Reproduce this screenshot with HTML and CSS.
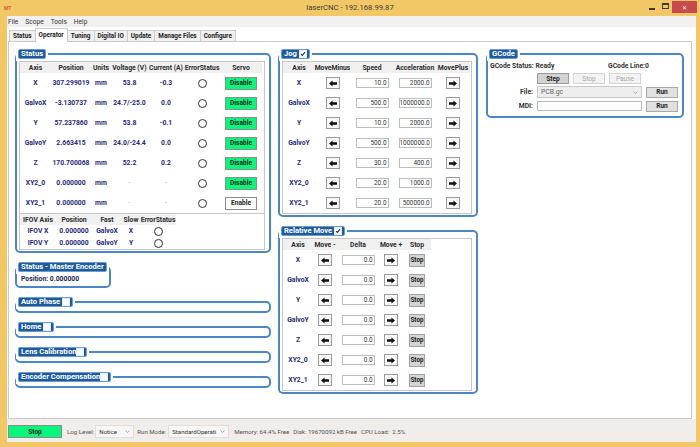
FILE: index.html
```html
<!DOCTYPE html>
<html>
<head>
<meta charset="utf-8">
<title>laserCNC</title>
<link rel="stylesheet" href="styles.css">
</head>
<body>
<div class="window">
  <div class="titlebar">
    <div class="tb-left"><span class="app-icon">MT</span></div>
    <div class="title">laserCNC - 192.168.99.87</div>
    <div class="controls"><span class="ctl-min"></span><span class="ctl-max"></span><span class="ctl-close">✕</span></div>
  </div>
  <div class="client">
    <div class="menubar"><span>File</span><span>Scope</span><span>Tools</span><span>Help</span></div>
    <div class="tabarea">
      <div class="tabstrip">
        <span class="tab">Status</span><span class="tab active">Operator</span><span class="tab">Tuning</span><span class="tab">Digital IO</span><span class="tab">Update</span><span class="tab">Manage Files</span><span class="tab">Configure</span>
      </div>
      <div class="panel">
        <div class="col col1">
          <fieldset class="group">
            <legend>Status</legend>
            <div class="gridbox">
              <div class="grid g-status">
                <span class="h">Axis</span><span class="h">Position</span><span class="h">Units</span><span class="h">Voltage (V)</span><span class="h">Current (A)</span><span class="h">ErrorStatus</span><span class="h">Servo</span>

                <span class="v">X</span><span class="v">307.299019</span><span class="v">mm</span><span class="v">53.8</span><span class="v">-0.3</span><span><i class="circle"></i></span><span><b class="btn servo green">Disable</b></span>

                <span class="v">GalvoX</span><span class="v">-3.130737</span><span class="v">mm</span><span class="v">24.7/-25.0</span><span class="v">0.0</span><span><i class="circle"></i></span><span><b class="btn servo green">Disable</b></span>

                <span class="v">Y</span><span class="v">57.237860</span><span class="v">mm</span><span class="v">53.8</span><span class="v">-0.1</span><span><i class="circle"></i></span><span><b class="btn servo green">Disable</b></span>

                <span class="v">GalvoY</span><span class="v">2.663415</span><span class="v">mm</span><span class="v">24.0/-24.4</span><span class="v">0.0</span><span><i class="circle"></i></span><span><b class="btn servo green">Disable</b></span>

                <span class="v">Z</span><span class="v">170.700068</span><span class="v">mm</span><span class="v">52.2</span><span class="v">0.2</span><span><i class="circle"></i></span><span><b class="btn servo green">Disable</b></span>

                <span class="v">XY2_0</span><span class="v">0.000000</span><span class="v">mm</span><span class="dash">-</span><span class="dash">-</span><span><i class="circle"></i></span><span><b class="btn servo green">Disable</b></span>

                <span class="v">XY2_1</span><span class="v">0.000000</span><span class="v">mm</span><span class="dash">-</span><span class="dash">-</span><span><i class="circle"></i></span><span><b class="btn servo white">Enable</b></span>
              </div>
              <div class="grid g-ifov">
                <span class="h">IFOV Axis</span><span class="h">Position</span><span class="h">Fast</span><span class="h">Slow</span><span class="h">ErrorStatus</span>
                <span class="v">IFOV X</span><span class="v">0.000000</span><span class="v">GalvoX</span><span class="v">X</span><span><i class="circle"></i></span>
                <span class="v">IFOV Y</span><span class="v">0.000000</span><span class="v">GalvoY</span><span class="v">Y</span><span><i class="circle"></i></span>
              </div>
            </div>
          </fieldset>

          <fieldset class="group enc">
            <legend>Status - Master Encoder</legend>
            <div class="enc-line">Position: 0.000000</div>
          </fieldset>

          <fieldset class="group">
            <legend>Auto Phase<span class="cb"><svg viewBox="0 0 7 7"></svg></span></legend>
            <div class="empty"></div>
          </fieldset>
          <fieldset class="group">
            <legend>Home<span class="cb"><svg viewBox="0 0 7 7"></svg></span></legend>
            <div class="empty"></div>
          </fieldset>
          <fieldset class="group">
            <legend>Lens Calibration<span class="cb tight"><svg viewBox="0 0 7 7"></svg></span></legend>
            <div class="empty"></div>
          </fieldset>
          <fieldset class="group">
            <legend>Encoder Compensation<span class="cb tight"><svg viewBox="0 0 7 7"></svg></span></legend>
            <div class="empty"></div>
          </fieldset>
        </div>

        <div class="col col2">
          <fieldset class="group">
            <legend>Jog<span class="cb"><svg viewBox="0 0 7 7"><path d="M1.2 3.6 L2.8 5.2 L5.8 1.4" /></svg></span></legend>
            <div class="gridbox">
              <div class="grid g-jog">
                <span class="h">Axis</span><span class="h">MoveMinus</span><span class="h">Speed</span><span class="h">Acceleration</span><span class="h">MovePlus</span>

                <span class="v">X</span><span><b class="arrowbtn"><svg viewBox="0 0 9 7"><polygon points="0,3.5 4,0 4,2 9,2 9,5 4,5 4,7"/></svg></b></span><span><b class="field">10.0</b></span><span><b class="field">2000.0</b></span><span><b class="arrowbtn"><svg viewBox="0 0 9 7"><polygon points="9,3.5 5,0 5,2 0,2 0,5 5,5 5,7"/></svg></b></span>

                <span class="v">GalvoX</span><span><b class="arrowbtn"><svg viewBox="0 0 9 7"><polygon points="0,3.5 4,0 4,2 9,2 9,5 4,5 4,7"/></svg></b></span><span><b class="field">500.0</b></span><span><b class="field">1000000.0</b></span><span><b class="arrowbtn"><svg viewBox="0 0 9 7"><polygon points="9,3.5 5,0 5,2 0,2 0,5 5,5 5,7"/></svg></b></span>

                <span class="v">Y</span><span><b class="arrowbtn"><svg viewBox="0 0 9 7"><polygon points="0,3.5 4,0 4,2 9,2 9,5 4,5 4,7"/></svg></b></span><span><b class="field">10.0</b></span><span><b class="field">2000.0</b></span><span><b class="arrowbtn"><svg viewBox="0 0 9 7"><polygon points="9,3.5 5,0 5,2 0,2 0,5 5,5 5,7"/></svg></b></span>

                <span class="v">GalvoY</span><span><b class="arrowbtn"><svg viewBox="0 0 9 7"><polygon points="0,3.5 4,0 4,2 9,2 9,5 4,5 4,7"/></svg></b></span><span><b class="field">500.0</b></span><span><b class="field">1000000.0</b></span><span><b class="arrowbtn"><svg viewBox="0 0 9 7"><polygon points="9,3.5 5,0 5,2 0,2 0,5 5,5 5,7"/></svg></b></span>

                <span class="v">Z</span><span><b class="arrowbtn"><svg viewBox="0 0 9 7"><polygon points="0,3.5 4,0 4,2 9,2 9,5 4,5 4,7"/></svg></b></span><span><b class="field">30.0</b></span><span><b class="field">400.0</b></span><span><b class="arrowbtn"><svg viewBox="0 0 9 7"><polygon points="9,3.5 5,0 5,2 0,2 0,5 5,5 5,7"/></svg></b></span>

                <span class="v">XY2_0</span><span><b class="arrowbtn"><svg viewBox="0 0 9 7"><polygon points="0,3.5 4,0 4,2 9,2 9,5 4,5 4,7"/></svg></b></span><span><b class="field">20.0</b></span><span><b class="field">1000.0</b></span><span><b class="arrowbtn"><svg viewBox="0 0 9 7"><polygon points="9,3.5 5,0 5,2 0,2 0,5 5,5 5,7"/></svg></b></span>

                <span class="v">XY2_1</span><span><b class="arrowbtn"><svg viewBox="0 0 9 7"><polygon points="0,3.5 4,0 4,2 9,2 9,5 4,5 4,7"/></svg></b></span><span><b class="field">20.0</b></span><span><b class="field">500000.0</b></span><span><b class="arrowbtn"><svg viewBox="0 0 9 7"><polygon points="9,3.5 5,0 5,2 0,2 0,5 5,5 5,7"/></svg></b></span>
              </div>
            </div>
          </fieldset>

          <fieldset class="group">
            <legend>Relative Move<span class="cb"><svg viewBox="0 0 7 7"><path d="M1.2 3.6 L2.8 5.2 L5.8 1.4" /></svg></span></legend>
            <div class="gridbox">
              <div class="grid g-rel">
                <span class="h">Axis</span><span class="h">Move -</span><span class="h">Delta</span><span class="h">Move +</span><span class="h">Stop</span>

                <span class="v">X</span><span><b class="arrowbtn"><svg viewBox="0 0 9 7"><polygon points="0,3.5 4,0 4,2 9,2 9,5 4,5 4,7"/></svg></b></span><span><b class="field">0.0</b></span><span><b class="arrowbtn"><svg viewBox="0 0 9 7"><polygon points="9,3.5 5,0 5,2 0,2 0,5 5,5 5,7"/></svg></b></span><span><b class="btn stopbtn">Stop</b></span>

                <span class="v">GalvoX</span><span><b class="arrowbtn"><svg viewBox="0 0 9 7"><polygon points="0,3.5 4,0 4,2 9,2 9,5 4,5 4,7"/></svg></b></span><span><b class="field">0.0</b></span><span><b class="arrowbtn"><svg viewBox="0 0 9 7"><polygon points="9,3.5 5,0 5,2 0,2 0,5 5,5 5,7"/></svg></b></span><span><b class="btn stopbtn">Stop</b></span>

                <span class="v">Y</span><span><b class="arrowbtn"><svg viewBox="0 0 9 7"><polygon points="0,3.5 4,0 4,2 9,2 9,5 4,5 4,7"/></svg></b></span><span><b class="field">0.0</b></span><span><b class="arrowbtn"><svg viewBox="0 0 9 7"><polygon points="9,3.5 5,0 5,2 0,2 0,5 5,5 5,7"/></svg></b></span><span><b class="btn stopbtn">Stop</b></span>

                <span class="v">GalvoY</span><span><b class="arrowbtn"><svg viewBox="0 0 9 7"><polygon points="0,3.5 4,0 4,2 9,2 9,5 4,5 4,7"/></svg></b></span><span><b class="field">0.0</b></span><span><b class="arrowbtn"><svg viewBox="0 0 9 7"><polygon points="9,3.5 5,0 5,2 0,2 0,5 5,5 5,7"/></svg></b></span><span><b class="btn stopbtn">Stop</b></span>

                <span class="v">Z</span><span><b class="arrowbtn"><svg viewBox="0 0 9 7"><polygon points="0,3.5 4,0 4,2 9,2 9,5 4,5 4,7"/></svg></b></span><span><b class="field">0.0</b></span><span><b class="arrowbtn"><svg viewBox="0 0 9 7"><polygon points="9,3.5 5,0 5,2 0,2 0,5 5,5 5,7"/></svg></b></span><span><b class="btn stopbtn">Stop</b></span>

                <span class="v">XY2_0</span><span><b class="arrowbtn"><svg viewBox="0 0 9 7"><polygon points="0,3.5 4,0 4,2 9,2 9,5 4,5 4,7"/></svg></b></span><span><b class="field">0.0</b></span><span><b class="arrowbtn"><svg viewBox="0 0 9 7"><polygon points="9,3.5 5,0 5,2 0,2 0,5 5,5 5,7"/></svg></b></span><span><b class="btn stopbtn">Stop</b></span>

                <span class="v">XY2_1</span><span><b class="arrowbtn"><svg viewBox="0 0 9 7"><polygon points="0,3.5 4,0 4,2 9,2 9,5 4,5 4,7"/></svg></b></span><span><b class="field">0.0</b></span><span><b class="arrowbtn"><svg viewBox="0 0 9 7"><polygon points="9,3.5 5,0 5,2 0,2 0,5 5,5 5,7"/></svg></b></span><span><b class="btn stopbtn">Stop</b></span>
              </div>
            </div>
          </fieldset>
        </div>

        <div class="col col3">
          <fieldset class="group">
            <legend>GCode</legend>
            <div class="gcode">
              <div class="gline"><span>GCode Status: Ready</span><span>GCode Line:0</span></div>
              <div class="gbtns"><b class="btn gbtn step">Step</b><b class="btn gbtn disabled">Stop</b><b class="btn gbtn disabled">Pause</b></div>
              <span class="glabel">File:</span>
              <div class="combo"><span>PCB.gc</span><svg class="chev" viewBox="0 0 5 3"><polyline points="0.5,0.5 2.5,2.5 4.5,0.5"/></svg></div>
              <b class="btn run">Run</b>
              <span class="glabel">MDI:</span>
              <div class="mdi"></div>
              <b class="btn run">Run</b>
            </div>
          </fieldset>
        </div>
      </div>
    </div>
    <div class="statusbar">
      <b class="btn sb-stop">Stop</b>
      <span>Log Level:</span>
      <div class="sb-combo c-notice"><span>Notice</span><svg class="chev" viewBox="0 0 5 3"><polyline points="0.5,0.5 2.5,2.5 4.5,0.5"/></svg></div>
      <span class="sb-label">Run Mode:</span>
      <div class="sb-combo c-run"><span>StandardOperati</span><svg class="chev" viewBox="0 0 5 3"><polyline points="0.5,0.5 2.5,2.5 4.5,0.5"/></svg></div>
      <span class="stat first">Memory: 64.4% Free</span>
      <span class="stat">Disk: 19670092 kB Free</span>
      <span class="stat">CPU Load:&nbsp; 2.5%</span>
    </div>
  </div>
</div>
</body>
</html>
```

FILE: styles.css
```css
* { box-sizing: border-box; }
html, body { margin: 0; padding: 0; }
body {
  width: 700px; height: 447px; overflow: hidden;
  background: #f1c865;
  font-family: Roboto, "Liberation Sans", Arial, sans-serif;
  font-size: 6.8px; color: #222;
}
b, i { font-style: normal; }

.window { width: 700px; height: 447px; display: flex; flex-direction: column; background: #f1c865; }

/* title bar */
.titlebar { flex: 0 0 16px; display: grid; grid-template-columns: 1fr auto 1fr; }
.tb-left { display: flex; align-items: center; padding-left: 4px; }
.app-icon { font-size: 5px; font-weight: 700; color: #d8603a; }
.title { font-size: 7.7px; color: #3b3b3b; line-height: 16px; }
.controls { justify-self: end; display: flex; align-items: flex-start; padding-right: 3px; }
.ctl-min { width: 6px; height: 2px; background: #3a3a3a; margin-top: 8px; }
.ctl-max { width: 7px; height: 6px; border: 1px solid #3a3a3a; border-top-width: 2px; margin: 3px 0 0 7px; }
.ctl-close {
  width: 25px; height: 12px; margin: 1px 0 0 3px;
  background: #c94a4e; color: #fff; font-size: 6px;
  display: flex; align-items: center; justify-content: center;
}

/* client */
.client { flex: 1; display: flex; flex-direction: column; margin: 0 4px 5px 7px; background: #f0edeb; }
.menubar {
  flex: 0 0 11px; display: flex; align-items: center; gap: 7px; padding-left: 1px;
  background: #f0f0f0; font-size: 6.6px; color: #333;
}
.tabarea { flex: 1; display: flex; flex-direction: column; background: #fff; }
.tabstrip { flex: 0 0 14px; display: flex; align-items: flex-end; padding-left: 2px; }
.tab {
  height: 11px; padding: 0 3px; border: 1px solid #cbcbcb; border-bottom: 0;
  background: #f0f0f0; font-weight: 700; font-size: 6.4px; line-height: 10px; color: #222;
  margin-right: -1px; white-space: nowrap;
}
.tab.active { height: 14px; line-height: 12px; background: #fff; position: relative; z-index: 1; margin-bottom: -1px; }

.panel {
  flex: 0 0 378px; margin: 0 4px 0 1px; border: 1px solid #c9c9c9;
  padding: 5px 0 0 6px; display: flex; align-items: flex-start; gap: 7px; background: #fff;
}
.col { display: flex; flex-direction: column; gap: 7px; }
.col1 { width: 256px; }
.col2 { width: 200px; }
.col3 { width: 198px; margin-left: 1px; }

/* group boxes */
.group {
  margin: 0; min-width: 0;
  border: 2px solid #4b86c6; border-radius: 5px;
  padding: 0 4px 1px 2px;
}
.group > legend {
  margin-left: -3px; padding: 0 3px; height: 14px;
  border: 2px solid #fff; border-radius: 4px;
  background: #1d5c9c; background-clip: padding-box;
  box-shadow: inset 0 0 0 1px #6b9bd2;
  color: #fff; font-weight: 700; font-size: 7.6px; line-height: 10px; white-space: nowrap;
}
.cb {
  display: inline-block; width: 8px; height: 8px; margin-left: 2px; vertical-align: top; margin-top: 1px;
  background: #fff; border: 1px solid #e4ecf5;
}
.cb.tight { margin-left: 0; }
.cb svg { display: block; width: 6px; height: 6px; }
.cb path { fill: none; stroke: #1c3552; stroke-width: 1.3; }
.empty { height: 1px; }
.enc { align-self: flex-start; width: 96px; }
.enc-line { height: 11px; line-height: 11px; padding-left: 2px; font-weight: 700; color: #1a1f55; }

/* grids */
.gridbox { border: 1px solid #c6c6c6; background: #fff; }
.grid { display: grid; grid-template-rows: 11px; grid-auto-rows: 20px; }
.grid > span { display: flex; align-items: center; justify-content: center; white-space: nowrap; }
.g-status { grid-template-columns: 31px 40px 20px 37px 36px 36px 42px; }
.g-ifov { grid-template-columns: 36px 36px 30px 18px 36px; grid-auto-rows: 12px; border-top: 1px solid #c6c6c6; }
.g-jog { grid-template-columns: 32px 35px 44px 42px 34px; }
.g-rel { grid-template-columns: 30px 24px 42px 24px 28px; }
.h { background: #f0f0f0; font-weight: 700; color: #2a2a2a; }
.v { font-weight: 700; color: #1f297a; }
.dash { color: #b5b5b5; }

.circle { display: block; width: 9px; height: 9px; border: 1px solid #333; border-radius: 50%; background: #fff; }
.btn {
  display: flex; align-items: center; justify-content: center;
  font-weight: 700; font-size: 6.6px; color: #222; border: 1px solid #8c8c8c; white-space: nowrap;
}
.servo { width: 32px; height: 13px; }
.green { background: #07f77d; }
.white { background: #fff; }
.arrowbtn {
  display: flex; align-items: center; justify-content: center;
  width: 14px; height: 12px; border: 1px solid #9a9a9a; background: #f7f7f7;
}
.arrowbtn svg { display: block; width: 8px; height: 7px; }
.arrowbtn polygon { fill: #111; }
.field {
  display: block; width: 33px; height: 10px; border: 1px solid #bdbdbd; background: #fff;
  font-weight: 400; font-size: 6.4px; line-height: 8px; text-align: right; padding-right: 1px; color: #333;
}
.stopbtn { width: 16px; height: 13px; background: #d4d4d4; border-color: #a2a2a2; font-size: 6.3px; }

/* gcode */
.gcode {
  display: grid; grid-template-columns: 43px 105px 32px; column-gap: 4px;
  grid-template-rows: 10px 11px 12px 12px; row-gap: 2px; margin-bottom: 3px;
}
.gline { grid-column: 1 / -1; display: grid; grid-template-columns: 118px auto; align-items: center; font-weight: 700; color: #333; }
.gbtns { grid-column: 2 / 4; display: flex; gap: 4px; }
.gbtn { width: 32px; height: 11px; }
.step { background: #d3d3d3; border-color: #9b9b9b; }
.disabled { background: #f3f3f3; border-color: #d3d3d3; color: #a9a9a9; font-weight: 400; }
.glabel { display: flex; align-items: center; justify-content: flex-end; font-weight: 700; color: #333; }
.combo {
  display: flex; align-items: center; justify-content: space-between; padding: 0 3px;
  border: 1px solid #c9c9c9; background: #eeeeee; color: #666;
}
.chev { display: block; width: 5px; height: 3px; }
.chev polyline { fill: none; stroke: #9a9a9a; stroke-width: 0.8; }
.mdi { height: 10px; align-self: center; border: 1px solid #b9b9b9; background: #fff; }
.run { height: 11px; align-self: center; background: #e1e1e1; border-color: #a9a9a9; }

/* status bar */
.statusbar {
  flex: 0 0 23px; display: flex; align-items: center; padding: 2px 0 0 1px;
  font-size: 6.1px; color: #505050; white-space: nowrap;
}
.sb-stop { width: 54px; height: 13px; background: #07f77d; margin-right: 5px; }
.sb-combo {
  height: 13px; display: flex; align-items: center; justify-content: space-between;
  padding: 0 3px; margin-left: 1px; border: 1px solid #dedede; background: #f6f6f6; color: #333; overflow: hidden;
}
.c-notice { width: 39px; }
.c-run { width: 61px; margin-left: 2px; }
.sb-label { margin-left: 3px; }
.stat { margin-left: 4px; }
.stat.first { margin-left: 5px; }
```
